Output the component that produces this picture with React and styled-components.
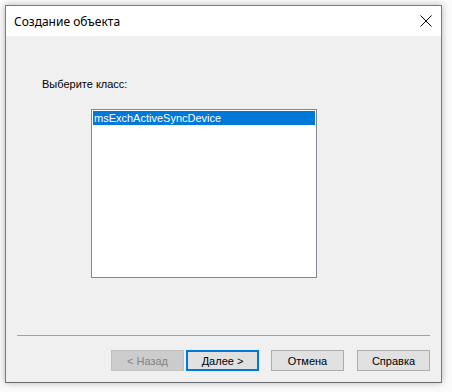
import React from "react";
import styled, { createGlobalStyle } from "styled-components";

const Global = createGlobalStyle`
  html, body { margin: 0; padding: 0; background: #ffffff; }
  body { font-family: "Liberation Sans", Arial, sans-serif; }
  * { box-sizing: border-box; }
`;

const Page = styled.div`
  width: 452px;
  height: 392px;
  padding: 5px 0 0 5px;
  background: #fbfbfb;
`;

const Window = styled.div`
  width: 437px;
  height: 378px;
  border: 1px solid #7a7a7a;
  border-bottom-color: #6a6a6a;
  background: #f0f0f0;
  box-shadow: 0 0 7px rgba(0, 0, 0, 0.28);
  display: flex;
  flex-direction: column;
`;

const TitleBar = styled.div`
  height: 30px;
  background: #ffffff;
  display: flex;
  align-items: center;
  justify-content: space-between;
  padding: 0 9px 0 8px;
`;

const Title = styled.span`
  font-family: "Noto Sans", "Segoe UI", sans-serif;
  font-size: 12px;
  color: #000;
`;

const CloseBtn = styled.div`
  width: 12px;
  height: 12px;
  display: flex;
`;

const Body = styled.div`
  flex: 1;
  display: flex;
  flex-direction: column;
  padding: 42px 0 0 36px;
`;

const Label = styled.div`
  font-size: 11px;
  color: #000;
  line-height: 13px;
`;

const ListBox = styled.div`
  margin: 18px 0 0 49px;
  width: 226px;
  height: 169px;
  border: 1px solid #828790;
  background: #ffffff;
  padding: 1px;
`;

const ListItem = styled.div`
  height: 14px;
  line-height: 14px;
  font-size: 11px;
  padding-left: 1px;
  color: ${(p) => (p.$selected ? "#ffffff" : "#000")};
  background: ${(p) => (p.$selected ? "#0078d7" : "transparent")};
`;

const Separator = styled.div`
  margin: 57px 0 0 -25px;
  width: 413px;
  height: 1px;
  background: #a0a0a0;
`;

const Buttons = styled.div`
  display: flex;
  margin: 14px 0 0 69px;
`;

const Button = styled.div`
  width: 73px;
  height: 21px;
  margin-left: ${(p) => p.$ml || 0}px;
  display: flex;
  align-items: center;
  justify-content: center;
  font-size: 11px;
  border: ${(p) => (p.$default ? "2px solid #0078d7" : "1px solid #adadad")};
  border-color: ${(p) => (p.$disabled ? "#bfbfbf" : undefined)};
  background: ${(p) => (p.$disabled ? "#cccccc" : "#e1e1e1")};
  color: ${(p) => (p.$disabled ? "#838383" : "#000")};
`;

export default function App() {
  return (
    <>
      <Global />
      <Page>
        <Window>
          <TitleBar>
            <Title>Создание объекта</Title>
            <CloseBtn>
              <svg width="12" height="12" viewBox="0 0 12 12">
                <path d="M0.5 0.5 L11.5 11.5 M11.5 0.5 L0.5 11.5" stroke="#000" strokeWidth="1" />
              </svg>
            </CloseBtn>
          </TitleBar>
          <Body>
            <Label>Выберите класс:</Label>
            <ListBox>
              <ListItem $selected>msExchActiveSyncDevice</ListItem>
            </ListBox>
            <Separator />
            <Buttons>
              <Button $disabled>&lt; Назад</Button>
              <Button $default $ml={2}>Далее &gt;</Button>
              <Button $ml={12}>Отмена</Button>
              <Button $ml={13}>Справка</Button>
            </Buttons>
          </Body>
        </Window>
      </Page>
    </>
  );
}
